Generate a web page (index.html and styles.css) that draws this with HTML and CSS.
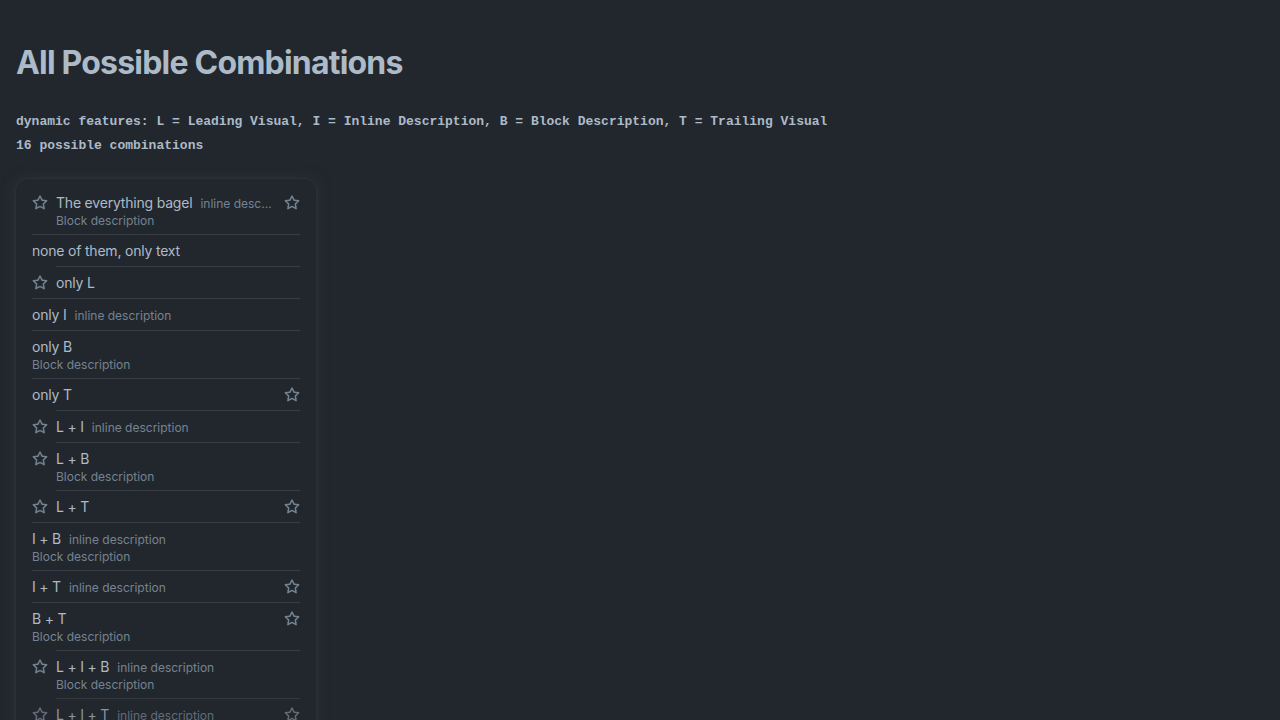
FILE: index.html
```html
<!DOCTYPE html>
<html lang="en">
<head>
<meta charset="utf-8">
<title>All Possible Combinations</title>
<link rel="stylesheet" href="styles.css">
</head>
<body>
<svg width="0" height="0" class="defs" aria-hidden="true">
  <symbol id="star" viewBox="0 0 16 16">
    <path d="M8 .25a.75.75 0 0 1 .673.418l1.882 3.815 4.21.612a.75.75 0 0 1 .416 1.279l-3.046 2.97.719 4.192a.751.751 0 0 1-1.088.791L8 12.347l-3.766 1.980a.75.75 0 0 1-1.088-.79l.72-4.194L.818 6.374a.75.75 0 0 1 .416-1.28l4.21-.611L7.327.668A.75.75 0 0 1 8 .25Zm0 2.445L6.615 5.5a.75.75 0 0 1-.564.41l-3.097.45 2.24 2.184a.75.75 0 0 1 .216.664l-.528 3.084 2.769-1.456a.75.75 0 0 1 .698 0l2.770 1.456-.53-3.084a.75.75 0 0 1 .216-.664l2.24-2.183-3.096-.45a.75.75 0 0 1-.564-.41L8 2.694Z"/>
  </symbol>
</svg>
<main class="page">
  <h1 class="title">All Possible Combinations</h1>
  <p class="mono first">dynamic features: L = Leading Visual, I = Inline Description, B = Block Description, T = Trailing Visual</p>
  <p class="mono">16 possible combinations</p>

  <ul class="card">
    <li class="item">
      <span class="lead"><svg class="icon"><use href="#star"/></svg></span>
      <div class="main">
        <div class="text">
          <div class="line"><span class="label">The everything bagel</span><span class="inline">inline description</span></div>
          <div class="block">Block description</div>
        </div>
        <span class="trail"><svg class="icon"><use href="#star"/></svg></span>
      </div>
    </li>
    <li class="item">
      <div class="main">
        <div class="text"><div class="line"><span class="label">none of them, only text</span></div></div>
      </div>
    </li>
    <li class="item">
      <span class="lead"><svg class="icon"><use href="#star"/></svg></span>
      <div class="main">
        <div class="text"><div class="line"><span class="label">only L</span></div></div>
      </div>
    </li>
    <li class="item">
      <div class="main">
        <div class="text"><div class="line"><span class="label">only I</span><span class="inline">inline description</span></div></div>
      </div>
    </li>
    <li class="item">
      <div class="main">
        <div class="text"><div class="line"><span class="label">only B</span></div><div class="block">Block description</div></div>
      </div>
    </li>
    <li class="item">
      <div class="main">
        <div class="text"><div class="line"><span class="label">only T</span></div></div>
        <span class="trail"><svg class="icon"><use href="#star"/></svg></span>
      </div>
    </li>
    <li class="item">
      <span class="lead"><svg class="icon"><use href="#star"/></svg></span>
      <div class="main">
        <div class="text"><div class="line"><span class="label">L + I</span><span class="inline">inline description</span></div></div>
      </div>
    </li>
    <li class="item">
      <span class="lead"><svg class="icon"><use href="#star"/></svg></span>
      <div class="main">
        <div class="text"><div class="line"><span class="label">L + B</span></div><div class="block">Block description</div></div>
      </div>
    </li>
    <li class="item">
      <span class="lead"><svg class="icon"><use href="#star"/></svg></span>
      <div class="main">
        <div class="text"><div class="line"><span class="label">L + T</span></div></div>
        <span class="trail"><svg class="icon"><use href="#star"/></svg></span>
      </div>
    </li>
    <li class="item">
      <div class="main">
        <div class="text"><div class="line"><span class="label">I + B</span><span class="inline">inline description</span></div><div class="block">Block description</div></div>
      </div>
    </li>
    <li class="item">
      <div class="main">
        <div class="text"><div class="line"><span class="label">I + T</span><span class="inline">inline description</span></div></div>
        <span class="trail"><svg class="icon"><use href="#star"/></svg></span>
      </div>
    </li>
    <li class="item">
      <div class="main">
        <div class="text"><div class="line"><span class="label">B + T</span></div><div class="block">Block description</div></div>
        <span class="trail"><svg class="icon"><use href="#star"/></svg></span>
      </div>
    </li>
    <li class="item">
      <span class="lead"><svg class="icon"><use href="#star"/></svg></span>
      <div class="main">
        <div class="text"><div class="line"><span class="label">L + I + B</span><span class="inline">inline description</span></div><div class="block">Block description</div></div>
      </div>
    </li>
    <li class="item dim">
      <span class="lead"><svg class="icon"><use href="#star"/></svg></span>
      <div class="main">
        <div class="text"><div class="line"><span class="label">L + I + T</span><span class="inline">inline description</span></div></div>
        <span class="trail"><svg class="icon"><use href="#star"/></svg></span>
      </div>
    </li>
    <li class="item">
      <span class="lead"><svg class="icon"><use href="#star"/></svg></span>
      <div class="main">
        <div class="text"><div class="line"><span class="label">L + B + T</span></div><div class="block">Block description</div></div>
        <span class="trail"><svg class="icon"><use href="#star"/></svg></span>
      </div>
    </li>
    <li class="item">
      <div class="main">
        <div class="text"><div class="line"><span class="label">I + B + T</span><span class="inline">inline description</span></div><div class="block">Block description</div></div>
        <span class="trail"><svg class="icon"><use href="#star"/></svg></span>
      </div>
    </li>
  </ul>
</main>
</body>
</html>
```

FILE: styles.css
```css
html, body {
  margin: 0;
  padding: 0;
  background: #22272e;
  color: #adbac7;
  font-family: Inter, "Noto Sans", "Liberation Sans", sans-serif;
  height: 100%;
  overflow: hidden;
}

.defs {
  position: absolute;
  width: 0;
  height: 0;
}

.page {
  padding: 0 16px;
}

.title {
  margin: 43px 0 0;
  font-size: 32px;
  line-height: 40px;
  font-weight: 700;
  letter-spacing: -0.8px;
  color: #adbac7;
}

.mono {
  margin: 0;
  font-family: "Liberation Mono", "DejaVu Sans Mono", monospace;
  font-size: 13px;
  line-height: 24px;
  font-weight: 700;
  color: #adbac7;
}

.mono.first {
  margin-top: 27px;
}

.card {
  list-style: none;
  margin: 21px 0 0;
  padding: 8px;
  width: 284px;
  background: #22272e;
  border-radius: 12px;
  box-shadow: 0 0 0 1px rgba(45, 51, 59, 0.6), 0 0 14px rgba(55, 62, 71, 0.55);
}

.item {
  display: flex;
  padding: 0 8px;
  font-size: 14px;
  line-height: 20px;
  letter-spacing: -0.2px;
}

.item.dim {
  opacity: 0.75;
}

.lead {
  flex: none;
  display: flex;
  align-items: center;
  height: 20px;
  margin: 6px 8px 0 0;
}

.icon {
  width: 16px;
  height: 16px;
  fill: #768390;
  display: block;
}

.main {
  flex: 1;
  min-width: 0;
  display: flex;
  padding: 6px 0;
  box-shadow: 0 -1px 0 #373e47;
}

.item:first-child .main {
  box-shadow: none;
}

.text {
  flex: 1;
  min-width: 0;
}

.line {
  display: flex;
  align-items: baseline;
  min-width: 0;
}

.label {
  flex: none;
  white-space: nowrap;
  color: #adbac7;
}

.inline {
  margin-left: 8px;
  font-size: 12px;
  line-height: 16px;
  letter-spacing: 0;
  color: #768390;
  white-space: nowrap;
  overflow: hidden;
  text-overflow: ellipsis;
  min-width: 0;
}

.block {
  font-size: 12px;
  line-height: 16px;
  letter-spacing: 0;
  color: #768390;
}

.trail {
  flex: none;
  display: flex;
  align-items: center;
  height: 20px;
  margin-left: 10px;
}
```
